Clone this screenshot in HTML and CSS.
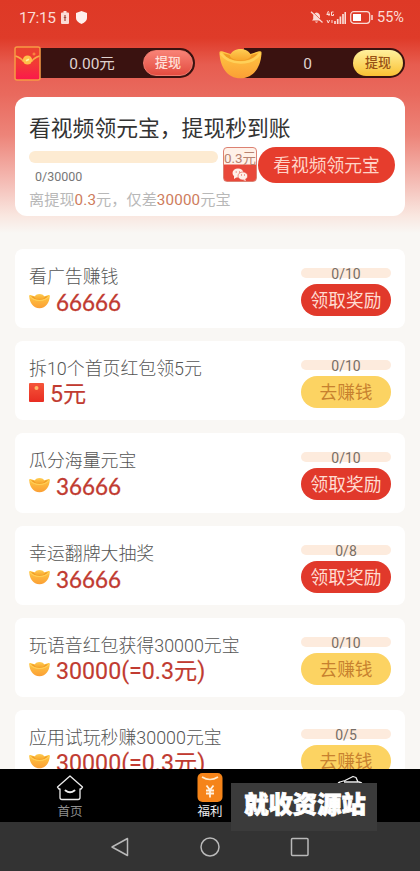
FILE: index.html
```html
<!DOCTYPE html>
<html lang="zh-CN">
<head>
<meta charset="utf-8">
<title>福利</title>
<link rel="stylesheet" href="styles.css">
</head>
<body>
<svg class="defs" aria-hidden="true">
  <defs>
    <linearGradient id="gold" x1="0" y1="0" x2="0" y2="1"><stop offset="0" stop-color="#ffc843"/><stop offset="1" stop-color="#fb9f35"/></linearGradient>
    <linearGradient id="dome" x1="0" y1="0" x2="0" y2="1"><stop offset="0" stop-color="#ffcf55"/><stop offset="1" stop-color="#f8a52b"/></linearGradient>
    <linearGradient id="red" x1="0" y1="0" x2="0" y2="1"><stop offset="0" stop-color="#f5553a"/><stop offset="1" stop-color="#e82d22"/></linearGradient>
    <linearGradient id="pink" x1="0" y1="0" x2="0" y2="1"><stop offset="0" stop-color="#e9432f"/><stop offset=".5" stop-color="#f23a35"/><stop offset="1" stop-color="#fb174c"/></linearGradient>
    <symbol id="ingot" viewBox="0 0 42 30">
      <path d="M.5 5Q0 2.500 3 3L12 6H30L39 3Q42 2.500 41.500 5C41 18 34 29.500 21 29.500S1 18 .5 5Z" fill="url(#gold)"/>
      <path d="M4 5L12 7H30L38 5Q33 12.500 21 12.500Q9 12.500 4 5Z" fill="#ef9a24"/>
      <path d="M10.500 7.500C13-1.500 29-1.500 31.500 7.500Q29 12 21 12Q13 12 10.500 7.500Z" fill="url(#dome)"/>
      <path d="M1.500 5Q8 14 21 14Q34 14 40.500 5" fill="none" stroke="#ffd058" stroke-width="2.400"/>
    </symbol>
    <symbol id="packet" viewBox="0 0 15 19">
      <rect width="15" height="19" rx="1" fill="url(#red)"/>
      <circle cx="7.500" cy="5" r="2" fill="#ffb868"/>
    </symbol>
  </defs>
</svg>
<div class="screen">
  <header class="hero">
    <div class="status">
      <div class="status-side">
        <span>17:15</span>
        <svg width="8" height="13" viewBox="0 0 8 13"><path d="M2.500 0h3v1.500H7q1 0 1 1V12q0 1-1 1H1q-1 0-1-1V2.500q0-1 1-1h1.500z" fill="#fbdcd6"/><path d="M4 4v6M2.800 6.500h2.400" stroke="#a5493c" stroke-width="1.200"/></svg>
        <svg class="shield" width="11" height="13" viewBox="0 0 11 13"><path d="M5.500 0L11 2V7Q11 10.500 5.500 13Q0 10.500 0 7V2Z" fill="#fff0ed"/></svg>
      </div>
      <div class="status-side">
        <svg width="13" height="13" viewBox="0 0 13 13"><path d="M2 9.500L3.200 8V5.500C3.200 3 4.500 2 6.500 1.500C9 2 10 3.500 10 5.500V8L11.500 9.500ZM5 10.500h3Q6.500 13 5 10.500Z" fill="#fbdcd6"/><path d="M1.500 0L13 11" stroke="#df3b29" stroke-width="1"/><path d="M1 .7L12.500 11.500" stroke="#fbdcd6" stroke-width="1.200"/></svg>
        <svg class="signal" width="20" height="13" viewBox="0 0 20 13"><path d="M9 13V10M11.700 13V8M14.400 13V5.500M17 13V3M19.300 13V1" stroke="#fbdcd6" stroke-width="1.700"/><path d="M2.500 0L.8 3.500H4M3 1.500V5M7.500 1H5.500V4.500H7.500V3M1 9L2.300 12L3.600 9M6 9v3" fill="none" stroke="#fbdcd6"/></svg>
        <svg class="battery" width="23" height="13" viewBox="0 0 23 13"><rect x=".7" y=".7" width="19" height="11.600" rx="3" fill="none" stroke="#fbdcd6" stroke-width="1.200"/><rect x="3" y="3" width="8" height="7" fill="#fff"/><path d="M22 4v5" stroke="#fbdcd6" stroke-width="1.500"/></svg>
        <span class="percent">55%</span>
      </div>
    </div>
    <div class="wallets">
      <div class="wallet cash">
        <svg class="wallet-icon" width="27" height="35" viewBox="0 0 27 35"><rect x="1" y="1" width="25" height="33" rx="2" fill="url(#pink)" stroke="#f79a44" stroke-width="1.500"/><path d="M1.500 10Q7 12 9 15H18Q20 12 25.500 10" fill="none" stroke="#f9ab4a" stroke-width="1.500"/><circle cx="13.500" cy="14" r="4.600" fill="#ffc04a"/><path d="M12 14.700L15 13.300" stroke="#fff0a8" stroke-width="1.800"/><path d="M20 6.500v3M18.500 8h3" stroke="#ff9a45"/></svg>
        <span class="wallet-value">0.00元</span>
        <span class="wallet-button red">提现</span>
      </div>
      <div class="wallet coins">
        <svg class="wallet-icon" width="43" height="31"><use href="#ingot"/></svg>
        <span class="wallet-value">0</span>
        <span class="wallet-button gold">提现</span>
      </div>
    </div>
    <section class="promo">
      <h1>看视频领元宝，提现秒到账</h1>
      <div class="promo-row">
        <div class="promo-progress"><div class="track"></div><span>0/30000</span></div>
        <div class="reward"><span>0.3元</span>
          <svg width="16" height="13" viewBox="0 0 16 13"><ellipse cx="6" cy="5" rx="5.500" ry="4.500" fill="#fff0e9"/><path d="M2 8v3l3-2z" fill="#fff0e9"/><ellipse cx="10.800" cy="8" rx="4.800" ry="4" fill="#fff0e9" stroke="#e15243" stroke-width=".6"/><path d="M13 11l1 2-3-1z" fill="#fff0e9"/><path d="M3.700 4h1M7 4h1M9 7h1M12 7h1" stroke="#e15243"/></svg>
        </div>
        <div class="promo-button">看视频领元宝</div>
      </div>
      <p>离提现<b>0.3</b>元，仅差<b>30000</b>元宝</p>
    </section>
  </header>
  <main class="tasks">
    <article class="task"><div><h2>看广告赚钱</h2><div class="prize"><svg class="ingot"><use href="#ingot"/></svg><strong class="round">66666</strong></div></div><div class="action"><div class="count">0/10</div><div class="button claim">领取奖励</div></div></article>
    <article class="task"><div><h2>拆10个首页红包领5元</h2><div class="prize"><svg class="packet"><use href="#packet"/></svg><strong>5元</strong></div></div><div class="action"><div class="count">0/10</div><div class="button go">去赚钱</div></div></article>
    <article class="task"><div><h2>瓜分海量元宝</h2><div class="prize"><svg class="ingot"><use href="#ingot"/></svg><strong class="round">36666</strong></div></div><div class="action"><div class="count">0/10</div><div class="button claim">领取奖励</div></div></article>
    <article class="task"><div><h2>幸运翻牌大抽奖</h2><div class="prize"><svg class="ingot"><use href="#ingot"/></svg><strong class="round">36666</strong></div></div><div class="action"><div class="count">0/8</div><div class="button claim">领取奖励</div></div></article>
    <article class="task"><div><h2>玩语音红包获得30000元宝</h2><div class="prize"><svg class="ingot"><use href="#ingot"/></svg><strong>30000(=0.3元)</strong></div></div><div class="action"><div class="count">0/10</div><div class="button go">去赚钱</div></div></article>
    <article class="task"><div><h2>应用试玩秒赚30000元宝</h2><div class="prize"><svg class="ingot"><use href="#ingot"/></svg><strong>30000(=0.3元)</strong></div></div><div class="action"><div class="count">0/5</div><div class="button go">去赚钱</div></div></article>
  </main>
  <nav class="tabs">
    <div class="tab"><svg width="28" height="28" viewBox="0 0 28 28" fill="none" stroke="#eee" stroke-width="1.300" stroke-linejoin="round"><path d="M14 2.500L26.500 13.500L25 15.500H24V24Q24 26 22 26H6Q4 26 4 24V15.500H3L1.500 13.500Z"/><path d="M9.500 17Q14 20.500 18.500 17" stroke-width="2" stroke-linecap="round"/></svg><span>首页</span></div>
    <div class="tab active"><svg width="28" height="30" viewBox="0 0 28 30"><rect x="1.500" y="1" width="25" height="29" rx="5" fill="#f58419"/><path d="M6 5Q14 10 22 5" fill="none" stroke="#ffeacb" stroke-width="1.600"/><path d="M10.500 13.500L14 18L17.500 13.500M14 18V25.500M10 18.500h8M10 21.500h8" fill="none" stroke="#fff2df" stroke-width="1.800"/></svg><span>福利</span></div>
    <div class="tab"><svg width="28" height="28" viewBox="0 0 28 28" fill="none" stroke="#eee" stroke-width="1.300" stroke-linejoin="round"><path d="M2 11Q2 9 4 8.500L9 7L17 3L20 4L22 8.500M8 8.500H23Q26 9 26 11V25H2V11"/></svg></div>
  </nav>
  <footer class="system">
    <svg width="20" height="22" viewBox="0 0 20 22"><path d="M17.500 2.500V19.500L2 11Z"/></svg>
    <svg width="20" height="20" viewBox="0 0 20 20"><circle cx="10" cy="10" r="9"/></svg>
    <svg width="20" height="20" viewBox="0 0 20 20"><rect x="1.500" y="1.500" width="16.500" height="17" rx="1"/></svg>
  </footer>
  <div class="watermark">就收资源站</div>
</div>
</body>
</html>
```
FILE: styles.css
```css
* { box-sizing: border-box; }
body, h1, h2, p { margin: 0; font-weight: 400; }
body { font-family: Roboto, "Noto Sans CJK SC", sans-serif; background: #f9f7f4; }
.defs { position: absolute; width: 0; height: 0; }
svg { display: block; flex: none; }
.screen { position: relative; width: 420px; height: 871px; overflow: hidden; display: flex; flex-direction: column; }
.hero { height: 235px; flex: none; padding: 0 15px; background: linear-gradient(#de3926 0, #df3b29 38px, #e75d50 65px, #e96a5e 95px, #ed8479 135px, #f5c0b9 185px, #f9e6df 215px, #f9f7f4 233px); }
.status { height: 34px; display: flex; align-items: center; justify-content: space-between; padding-left: 4px; color: #fbdcd6; font-size: 15px; }
.status-side { display: flex; align-items: center; }
.status-side > span:first-child { width: 37px; margin-right: 5px; font-size: 15.500px; letter-spacing: -.4px; line-height: 20px; padding-top: 1px; }
.shield { margin-left: 7px; }
.signal { margin-left: 3px; }
.battery { margin-left: 4px; }
.percent { margin-left: 4px; font-size: 14.500px; width: 28px; padding-top: 1px; }
.wallets { display: flex; gap: 24px; margin-top: 14px; }
.wallet { height: 30px; display: flex; align-items: center; border-radius: 0 15px 15px 0; background: #3a1210; }
.cash { width: 180px; }
.coins { width: 186px; border-radius: 15px; background: linear-gradient(90deg, transparent 25px, #3a1210 25px); }
.wallet-value { flex: 1; text-align: center; color: #dfd1ce; font-size: 15.500px; line-height: 30px; padding-top: 2px; }
.cash .wallet-icon { margin-left: -1px; }
.wallet-button { width: 50px; height: 26px; margin-right: 2px; border-radius: 13px; font-size: 13px; line-height: 26px; text-align: center; font-weight: 500; }
.wallet-button.red { color: #ffe0da; background: linear-gradient(#f88276, #e34c40); border: 1px solid #f17a6d; line-height: 24px; }
.wallet-button.gold { color: #985015; background: linear-gradient(#fff09d, #fac133); }
.promo { height: 119px; margin-top: 19px; padding: 18px 10px 0 14px; border-radius: 12px; background: #fff; }
.promo h1 { font-size: 21.800px; line-height: 28px; color: #333; white-space: nowrap; }
.promo-row { display: flex; height: 43px; align-items: center; }
.promo-progress { width: 189px; height: 34px; padding-top: 3px; }
.track { height: 12px; border-radius: 6px; background: #fdebd2; }
.promo-progress span { display: block; margin: 6px 0 0 6px; font-size: 12.500px; line-height: 15px; color: #777; }
.reward { width: 34px; height: 35px; margin-left: 5px; border: 1.500px solid #dc8172; border-radius: 4px; background: linear-gradient(#fff1e8 16px, #e9483a 17px); overflow: hidden; display: flex; flex-direction: column; align-items: center; }
.reward span { font-size: 13.500px; line-height: 21px; height: 20px; color: #b98270; white-space: nowrap; }
.promo-button { width: 137px; height: 36px; margin-left: 1px; border-radius: 18px; background: #e63d2d; color: #ffd3c7; font-size: 17.800px; line-height: 37px; text-align: center; white-space: nowrap; }
.promo p { font-size: 15.200px; line-height: 22px; margin-top: 3px; color: #b8b8b8; white-space: nowrap; }
.promo b { font-weight: 400; color: #ce7c5c; letter-spacing: .15px; }
.tasks { height: 534px; flex: none; overflow: hidden; padding: 14px 15px 0; display: flex; flex-direction: column; gap: 13px; }
.task { height: 79.200px; flex: none; padding: 15px 14px 0 14px; border-radius: 8px; background: #fff; display: flex; justify-content: space-between; }
.task h2 { font-size: 17.900px; line-height: 26px; color: #555; white-space: nowrap; font-weight: 300; }
.prize { display: flex; align-items: center; height: 25px; }
.prize strong { font-weight: 400; font-size: 23.200px; line-height: 25px; color: #c13b31; white-space: nowrap; margin-left: 6px; -webkit-text-stroke: .15px #c13b31; }
.prize strong.round { font-family: Lato, sans-serif; font-size: 22.400px; -webkit-text-stroke-width: .3px; }
.ingot { width: 21px; height: 16px; margin-top: -4px; }
.packet { width: 15px; height: 19px; margin-top: -4px; }
.action { width: 90px; padding-top: 4px; }
.count { height: 10px; border-radius: 5px; background: #fdebdd; text-align: center; font-size: 14px; line-height: 13px; color: #776e66; }
.button { height: 32px; margin-top: 6px; border-radius: 16px; font-size: 17.700px; line-height: 34px; text-align: center; white-space: nowrap; }
.claim { background: #e1392b; color: #ffdcd2; }
.go { background: #fcd362; color: #c7812f; }
.tabs { height: 53px; flex: none; background: #000; display: flex; }
.tab { width: 140px; display: flex; flex-direction: column; align-items: center; padding-top: 4px; color: #8e8e8e; font-size: 12.500px; line-height: 18px; }
.tab svg { height: 29px; }
.tab span { padding-top: 1px; }
.tab.active { padding-top: 3px; color: #eee; }
.tab.active svg { height: 30px; }
.system { height: 49px; flex: none; background: #333; display: flex; justify-content: center; align-items: center; gap: 70px; }
.system svg { fill: none; stroke: #b9b9b9; stroke-width: 1.500; stroke-linejoin: round; }
.watermark { position: absolute; left: 231px; top: 783px; width: 146px; height: 48px; background: #3b3b3b; color: #fff; font-size: 24.300px; line-height: 43px; padding-left: 2px; font-weight: 900; text-align: center; -webkit-text-stroke: .8px #fff; }
```
